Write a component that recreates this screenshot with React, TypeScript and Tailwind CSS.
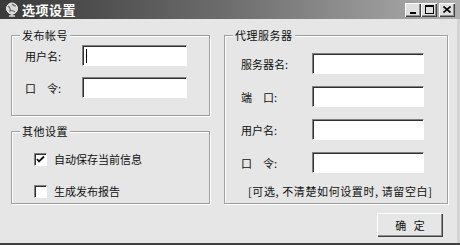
const cjk = "font-['Noto_Sans_CJK_SC','Noto_Sans',sans-serif]";

function Field({ cursor }: { cursor?: boolean }) {
	return (
		<div className="relative h-[21px] flex-1 border-t border-l border-[#808080] border-r border-b border-r-white border-b-white bg-white shadow-[inset_1px_1px_0_#303030]">
			{cursor && <div className="absolute left-[3px] top-[3px] h-[14px] w-px bg-black" />}
		</div>
	);
}

function Group({
	title,
	className,
	children,
}: {
	title: string;
	className: string;
	children: React.ReactNode;
}) {
	return (
		<div
			className={`relative border border-[#a0a0a0] shadow-[1px_1px_0_#ffffff,inset_1px_1px_0_#ffffff] ${className}`}
		>
			<span className="absolute -top-[8px] left-[8px] bg-[#e6e6e6] px-[2px] text-[11px] leading-[14px] tracking-[0.5px] text-[#101010]">
				{title}
			</span>
			{children}
		</div>
	);
}

function Check({ checked, label }: { checked?: boolean; label: string }) {
	return (
		<div className="flex items-center gap-[7px]">
			<div className="flex h-[13px] w-[13px] items-center justify-center border-t border-l border-[#808080] border-r border-b border-r-white border-b-white bg-white shadow-[inset_1px_1px_0_#303030]">
				{checked && (
					<svg width="9" height="9" viewBox="0 0 9 9">
						<path d="M1 4 L3 6.5 L8 1.5" fill="none" stroke="#111" strokeWidth="1.8" />
					</svg>
				)}
			</div>
			<span className="text-[11px] leading-[14px]">{label}</span>
		</div>
	);
}

function CaptionButton({ children }: { children: React.ReactNode }) {
	return (
		<div className="flex h-[14px] w-[16px] items-center justify-center bg-[#e0e0e0] shadow-[inset_1px_1px_0_#ffffff,inset_-1px_-1px_0_#404040,inset_-2px_-2px_0_#909090]">
			{children}
		</div>
	);
}

export default function App() {
	return (
		<div
			className={`flex h-[245px] w-[460px] flex-col overflow-hidden border-b-2 border-[#404040] bg-[#e6e6e6] text-[#101010] ${cjk}`}
		>
			<div className="flex h-[19px] items-center bg-gradient-to-r from-[#3a3a3a] via-[#6e6e6e] to-[#b0b0b0] pl-[5px] pr-[5px]">
				<svg width="14" height="16" viewBox="0 0 14 16">
					<circle cx="7" cy="6.5" r="5.5" fill="#d8d8d8" stroke="#f0f0f0" strokeWidth="1" />
					<path d="M3 4 Q6 6 5 9 Q8 8 10 10 M7 2 Q9 4 11 4" fill="none" stroke="#707070" strokeWidth="1.2" />
					<path d="M4 14 H10 M7 12 V14" stroke="#e0e0e0" strokeWidth="1.5" />
				</svg>
				<span className="ml-[3px] text-[13px] leading-[16px] font-bold tracking-[0.5px] text-white">选项设置</span>
				<div className="ml-auto flex items-center">
					<CaptionButton>
						<div className="mt-[6px] h-[2px] w-[6px] bg-black" />
					</CaptionButton>
					<CaptionButton>
						<div className="h-[9px] w-[9px] border border-t-2 border-black" />
					</CaptionButton>
					<div className="ml-[2px]">
						<CaptionButton>
							<svg width="8" height="7" viewBox="0 0 8 7">
								<path d="M0.5 0.5 L7.5 6.5 M7.5 0.5 L0.5 6.5" stroke="#000" strokeWidth="1.6" />
							</svg>
						</CaptionButton>
					</div>
				</div>
			</div>

			<div className="flex flex-1 border-r-[3px] border-[#d4d4d4] pl-[11px] pt-[16px]">
				<div className="flex w-[199px] flex-col gap-[15px]">
					<Group title="发布帐号" className="h-[81px] pt-[9px] pl-[13px] pr-[22px]">
						<div className="flex flex-col gap-[11px]">
							<div className="flex items-center">
								<span className="w-[57px] text-[11px] leading-[14px]">用户名:</span>
								<Field cursor />
							</div>
							<div className="flex items-center">
								<span className="w-[57px] text-[11px] leading-[14px]">口　令:</span>
								<Field />
							</div>
						</div>
					</Group>
					<Group title="其他设置" className="h-[73px] pt-[20px] pl-[22px]">
						<div className="flex flex-col gap-[18px]">
							<Check checked label="自动保存当前信息" />
							<Check label="生成发布报告" />
						</div>
					</Group>
				</div>

				<div className="ml-[14px] flex w-[224px] flex-col items-end">
					<Group title="代理服务器" className="h-[169px] w-full pt-[17px] pl-[16px] pr-[23px]">
						<div className="flex flex-col gap-[12px]">
							{["服务器名:", "端　口:", "用户名:", "口　令:"].map((label) => (
								<div key={label} className="flex items-center">
									<span className="w-[71px] text-[11px] leading-[14px]">{label}</span>
									<Field />
								</div>
							))}
						</div>
						<p className="mt-[11px] pl-[7px] text-[11px] leading-[14px] tracking-[0.6px] whitespace-nowrap">
							[可选, 不清楚如何设置时, 请留空白]
						</p>
					</Group>
					<button className="mt-[9px] mr-[5px] h-[24px] w-[66px] bg-[#e6e6e6] text-[11px] leading-[14px] shadow-[inset_1px_1px_0_#ffffff,inset_-1px_-1px_0_#404040,inset_-2px_-2px_0_#909090]">
						确&nbsp;&nbsp;&nbsp;定
					</button>
				</div>
			</div>
		</div>
	);
}
